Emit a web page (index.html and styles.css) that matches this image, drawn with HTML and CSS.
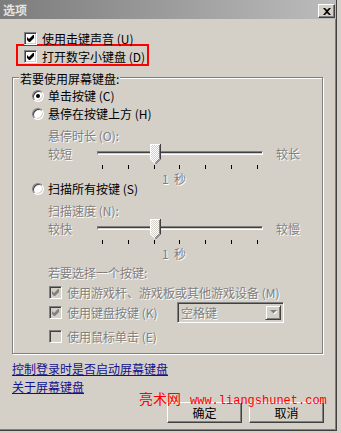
FILE: index.html
```html
<!DOCTYPE html>
<html lang="zh-CN">
<head>
  <meta charset="UTF-8">
  <meta name="viewport" content="width=device-width, initial-scale=1.0">
  <title>选项</title>
  <link rel="stylesheet" href="styles.css">
</head>
<body>
  <div class="window">
    <div class="title-bar">
      <span class="title">选项</span>
      <button class="close-btn" aria-label="关闭">
        <svg width="8" height="7" viewBox="0 0 8 7"><path d="M0 0h2l2 2 2-2h2L5 3.5 8 7H6L4 5 2 7H0l3-3.5z"/></svg>
      </button>
    </div>

    <div class="options">
      <div class="check-row">
        <span class="checkbox"><svg class="tick" width="7" height="7" viewBox="0 0 7 7"><path d="M0 2L2 4L6 0H7V3L3 7H2L0 5Z"/></svg></span>
        <span>使用击键声音 (U)</span>
      </div>
      <div class="highlight">
        <div class="check-row">
          <span class="checkbox"><svg class="tick" width="7" height="7" viewBox="0 0 7 7"><path d="M0 2L2 4L6 0H7V3L3 7H2L0 5Z"/></svg></span>
          <span>打开数字小键盘 (D)</span>
        </div>
      </div>
    </div>

    <div class="group">
      <div class="legend">若要使用屏幕键盘:</div>

      <div class="radio-row first">
        <span class="radio on"></span>
        <span>单击按键 (C)</span>
      </div>
      <div class="radio-row">
        <span class="radio"></span>
        <span>悬停在按键上方 (H)</span>
      </div>

      <div class="sub-label dis">悬停时长 (O):</div>
      <div class="slider-row">
        <span class="end-l dis">较短</span>
        <div class="track">
          <svg class="thumb" width="11" height="20" viewBox="0 0 11 20">
            <defs>
              <pattern id="dots1" width="2" height="2" patternUnits="userSpaceOnUse">
                <rect width="2" height="2" fill="#d4d0c8"/>
                <rect width="1" height="1" fill="#fff"/>
                <rect x="1" y="1" width="1" height="1" fill="#fff"/>
              </pattern>
            </defs>
            <path d="M0 0H11V15L5.5 20.5L0 15Z" fill="url(#dots1)"/>
            <path d="M0.5 15V0.5H10" fill="none" stroke="#fff"/>
            <path d="M0.5 15L5 19.5" fill="none" stroke="#fff"/>
            <path d="M10.5 0V15L5.5 20" fill="none" stroke="#404040"/>
            <path d="M9.5 1V14.6L5.2 18.9" fill="none" stroke="#808080"/>
          </svg>
        </div>
        <span class="end-r dis">较长</span>
      </div>
      <div class="ticks"><span></span><span></span><span></span><span></span><span></span><span></span><span></span></div>
      <div class="caption dis">1  秒</div>

      <div class="radio-row third">
        <span class="radio"></span>
        <span>扫描所有按键 (S)</span>
      </div>

      <div class="sub-label dis">扫描速度 (N):</div>
      <div class="slider-row">
        <span class="end-l dis">较快</span>
        <div class="track">
          <svg class="thumb" width="11" height="20" viewBox="0 0 11 20">
            <defs>
              <pattern id="dots2" width="2" height="2" patternUnits="userSpaceOnUse">
                <rect width="2" height="2" fill="#d4d0c8"/>
                <rect width="1" height="1" fill="#fff"/>
                <rect x="1" y="1" width="1" height="1" fill="#fff"/>
              </pattern>
            </defs>
            <path d="M0 0H11V15L5.5 20.5L0 15Z" fill="url(#dots2)"/>
            <path d="M0.5 15V0.5H10" fill="none" stroke="#fff"/>
            <path d="M0.5 15L5 19.5" fill="none" stroke="#fff"/>
            <path d="M10.5 0V15L5.5 20" fill="none" stroke="#404040"/>
            <path d="M9.5 1V14.6L5.2 18.9" fill="none" stroke="#808080"/>
          </svg>
        </div>
        <span class="end-r dis">较慢</span>
      </div>
      <div class="ticks"><span></span><span></span><span></span><span></span><span></span><span></span><span></span></div>
      <div class="caption dis">1  秒</div>

      <div class="sub-label choose dis">若要选择一个按键:</div>
      <div class="check-row key first-key">
        <span class="checkbox off"><svg class="tick" width="7" height="7" viewBox="0 0 7 7"><path d="M0 2L2 4L6 0H7V3L3 7H2L0 5Z"/></svg></span>
        <span class="dis">使用游戏杆、游戏板或其他游戏设备 (M)</span>
      </div>
      <div class="check-row key combo-row">
        <span class="checkbox off"><svg class="tick" width="7" height="7" viewBox="0 0 7 7"><path d="M0 2L2 4L6 0H7V3L3 7H2L0 5Z"/></svg></span>
        <span class="dis key-label">使用键盘按键 (K)</span>
        <div class="combo">
          <span class="combo-text dis">空格键</span>
          <span class="combo-btn">
            <svg width="7" height="5" viewBox="0 0 7 5"><path d="M1 1h7L4.5 4.5z" fill="#fff"/><path d="M0 0h7L3.5 3.5z" fill="#808080"/></svg>
          </span>
        </div>
      </div>
      <div class="check-row key last-key">
        <span class="checkbox off"></span>
        <span class="dis">使用鼠标单击 (E)</span>
      </div>
    </div>

    <div class="links">
      <a href="#">控制登录时是否启动屏幕键盘</a>
      <a href="#">关于屏幕键盘</a>
    </div>

    <div class="footer">
      <div class="watermark"><span class="wm-cn">亮术网</span><span class="wm-url">www.liangshunet.com</span></div>
      <button class="btn">确定</button>
      <button class="btn">取消</button>
    </div>
  </div>
</body>
</html>
```

FILE: styles.css
```css
body {
  margin: 0;
  background: #d4d0c8;
  font-family: "Noto Sans CJK SC", sans-serif;
  font-size: 12px;
  line-height: 13px;
  color: #000;
}

.window {
  width: 337px;
  height: 431px;
  box-sizing: border-box;
  border-right: 1px solid #404040;
  border-bottom: 1px solid #404040;
  box-shadow: inset -1px -1px 0 #808080;
  background: #d4d0c8;
  display: flex;
  flex-direction: column;
}

.title-bar {
  height: 19px;
  flex-shrink: 0;
  display: flex;
  align-items: flex-start;
  justify-content: space-between;
  padding-left: 3px;
  background: linear-gradient(to right, #7c7c7c, #bcbcbc);
}

.title {
  color: #e6e4de;
  font-weight: bold;
  line-height: 19px;
}

.close-btn {
  width: 17px;
  height: 14px;
  margin: 4px 1px 0 0;
  padding: 0;
  box-sizing: border-box;
  border: 1px solid;
  border-color: #fff #404040 #404040 #fff;
  box-shadow: inset -1px -1px 0 #808080;
  background: #d4d0c8;
  display: flex;
  align-items: center;
  justify-content: center;
}

/* checkboxes and radios */
.check-row {
  display: flex;
  align-items: center;
  gap: 5px;
  height: 13px;
}

.checkbox {
  width: 13px;
  height: 13px;
  flex-shrink: 0;
  box-sizing: border-box;
  border: 1px solid;
  border-color: #808080 #fff #fff #808080;
  box-shadow: inset 1px 1px 0 #404040, inset -1px -1px 0 #d4d0c8;
  background: #fff;
  display: flex;
  align-items: center;
  justify-content: center;
}

.checkbox .tick {
  fill: #000;
}

.checkbox.off {
  background: #d4d0c8;
}

.checkbox.off .tick {
  fill: #808080;
}

.radio {
  width: 12px;
  height: 12px;
  flex-shrink: 0;
  box-sizing: border-box;
  border-radius: 50%;
  border: 1px solid;
  border-color: #808080 #fff #fff #808080;
  box-shadow: inset 1px 1px 0 #404040, inset -1px -1px 0 #d4d0c8;
  background: #fff;
  display: flex;
  align-items: center;
  justify-content: center;
}

.radio.on::after {
  content: "";
  width: 4px;
  height: 4px;
  border-radius: 50%;
  background: #000;
}

.dis {
  color: #808080;
  text-shadow: 1px 1px 0 #fff;
}

/* top options */
.options {
  padding: 13px 0 0 24px;
}

.highlight {
  width: 133px;
  height: 22px;
  box-sizing: border-box;
  margin: -1px 0 0 -8px;
  padding: 4px 0 0 6px;
  border: 2px solid #f00;
}

/* group box */
.group {
  margin: 11px 0 0 12px;
  width: 311px;
  height: 277px;
  flex-shrink: 0;
  box-sizing: border-box;
  border: 1px solid #808080;
  box-shadow: 1px 1px 0 #fff, inset 1px 1px 0 #fff;
  display: flex;
  flex-direction: column;
}

.legend {
  align-self: flex-start;
  margin: -6px 0 0 6px;
  padding: 0 1px;
  background: #d4d0c8;
}

.radio-row {
  display: flex;
  align-items: center;
  gap: 4px;
  height: 13px;
  margin: 5px 0 0 19px;
}

.radio-row.first {
  margin-top: 4px;
}

.radio-row.third {
  margin-top: -3px;
}

.sub-label {
  margin: 9px 0 0 35px;
}

.sub-label.choose {
  margin-top: 6px;
}

.slider-row {
  display: flex;
  height: 19px;
  margin: 2px 0 0 35px;
  line-height: 19px;
}

.end-l {
  width: 49px;
}

.end-r {
  margin-left: 13px;
}

.track {
  position: relative;
  width: 166px;
  height: 4px;
  margin-top: 7px;
  box-sizing: border-box;
  border-top: 1px solid #808080;
  border-left: 1px solid #808080;
  border-bottom: 1px solid #fff;
  border-right: 1px solid #fff;
  box-shadow: inset 0 1px 0 #404040;
}

.thumb {
  position: absolute;
  left: 52px;
  top: -8px;
}

.ticks {
  display: flex;
  justify-content: space-between;
  width: 156px;
  height: 4px;
  margin: 2px 0 0 89px;
}

.ticks span {
  width: 1px;
  background: #000;
}

.caption {
  margin: 3px 0 0 149px;
  white-space: pre;
}

.check-row.key {
  margin: 7px 0 0 36px;
}

.check-row.combo-row {
  height: 21px;
  margin-top: 3px;
}

.key-label {
  width: 110px;
  flex-shrink: 0;
  margin-right: -5px;
}

.combo {
  display: flex;
  width: 107px;
  height: 21px;
  box-sizing: border-box;
  padding: 2px;
  border: 1px solid;
  border-color: #808080 #fff #fff #808080;
  box-shadow: inset 1px 1px 0 #404040, inset -1px -1px 0 #d4d0c8;
}

.combo-text {
  flex: 1;
  padding-left: 1px;
  line-height: 16px;
}

.combo-btn {
  width: 16px;
  height: 15px;
  box-sizing: border-box;
  border: 1px solid;
  border-color: #d4d0c8 #404040 #404040 #d4d0c8;
  box-shadow: inset 1px 1px 0 #fff, inset -1px -1px 0 #808080;
  display: flex;
  align-items: center;
  justify-content: center;
}

/* links and buttons */
.links {
  display: flex;
  flex-direction: column;
  align-items: flex-start;
  gap: 5px;
  margin: 8px 0 0 12px;
}

.links a {
  color: #12128c;
  text-decoration: underline;
}

.footer {
  position: relative;
  display: flex;
  justify-content: flex-end;
  gap: 7px;
  margin-top: 9px;
  padding-right: 12px;
}

.btn {
  width: 75px;
  height: 21px;
  padding: 0;
  box-sizing: border-box;
  border: 1px solid;
  border-color: #fff #404040 #404040 #fff;
  box-shadow: inset -1px -1px 0 #808080;
  background: #d4d0c8;
  font-family: inherit;
  font-size: 12px;
  line-height: 13px;
  color: #000;
}

.watermark {
  position: absolute;
  left: 139px;
  top: -10px;
  display: flex;
  align-items: baseline;
  gap: 9px;
  color: #f00;
  line-height: 13px;
}

.wm-cn {
  font-size: 14px;
  line-height: 13px;
}

.wm-url {
  font-family: "Liberation Mono", monospace;
  font-size: 12px;
}
```
